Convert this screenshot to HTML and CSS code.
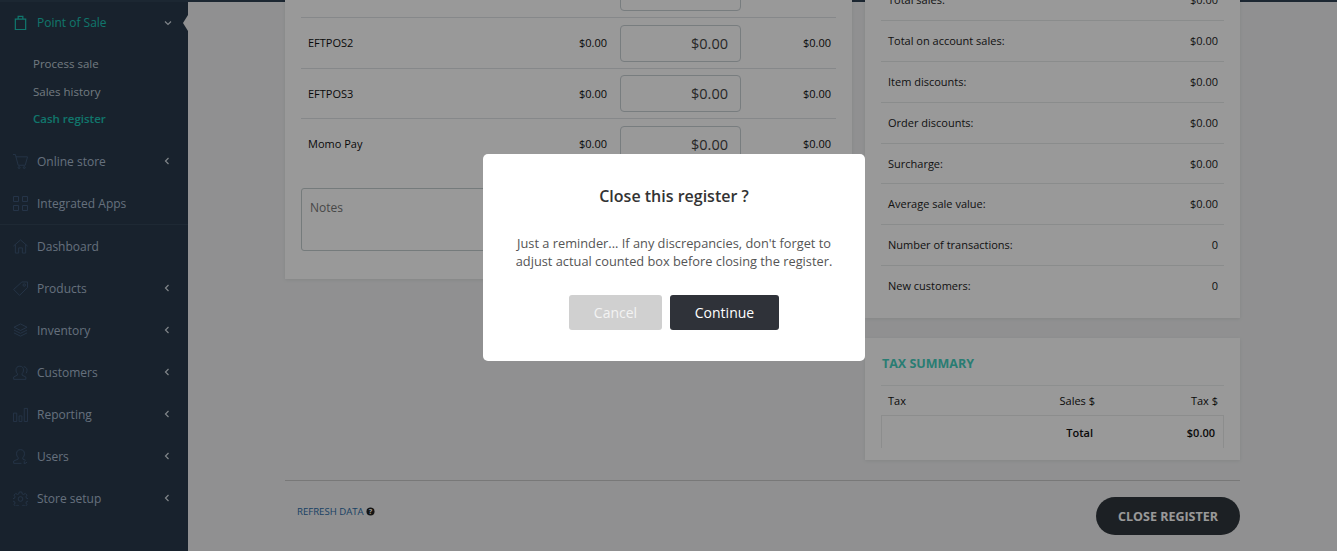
FILE: index.html
```html
<!DOCTYPE html>
<html lang="en">
<head>
<meta charset="utf-8">
<title>Cash register</title>
<link rel="stylesheet" href="styles.css">
</head>
<body>
<div class="topbar"></div>
<div class="app">
  <nav class="sidebar">
    <div class="nav-item active">
      <svg class="nav-icon" viewBox="0 0 16 16"><path d="M2.500 4.500h11v11h-11zM5.500 4.500V1.500h5v3"/></svg>
      <span class="nav-label">Point of Sale</span>
      <svg class="chev" viewBox="0 0 8 8"><path d="M1 2.500L4 5.500L7 2.500"/></svg>
    </div>
    <div class="sub">
      <div class="sub-item">Process sale</div>
      <div class="sub-item">Sales history</div>
      <div class="sub-item current">Cash register</div>
    </div>
    <div class="nav-item">
      <svg class="nav-icon" viewBox="0 0 16 16"><path d="M0 0.500h2.500l3 11.500h7.500l2.500-9h-12.500"/><circle cx="6.500" cy="14.500" r="1"/><circle cx="12" cy="14.500" r="1"/></svg>
      <span class="nav-label">Online store</span>
      <svg class="chev" viewBox="0 0 8 8"><path d="M5.500 1L2.500 4L5.500 7"/></svg>
    </div>
    <div class="nav-item divided">
      <svg class="nav-icon" viewBox="0 0 15 15"><path d="M0.500 0.500h5v5h-5zM9.500 0.500h5v5h-5zM0.500 9.500h5v5h-5zM9.500 9.500h5v5h-5z"/></svg>
      <span class="nav-label">Integrated Apps</span>
    </div>
    <div class="nav-item">
      <svg class="nav-icon" viewBox="0 0 16 16"><path d="M0.500 7.500L8 1l7.500 6.500M2.500 6v9h3.500v-5.500h4V15h3.500V6"/></svg>
      <span class="nav-label">Dashboard</span>
    </div>
    <div class="nav-item">
      <svg class="nav-icon" viewBox="0 0 16 16"><path d="M0.700 9L9.500 1h6v6L7 15.300z"/><circle cx="12" cy="4.300" r="1.300"/></svg>
      <span class="nav-label">Products</span>
      <svg class="chev" viewBox="0 0 8 8"><path d="M5.500 1L2.500 4L5.500 7"/></svg>
    </div>
    <div class="nav-item">
      <svg class="nav-icon" viewBox="0 0 16 16"><path d="M8 1l7 3.500l-7 3.500l-7-3.500zM1 7.500l7 3.500l7-3.500M1 10.500l7 3.500l7-3.500"/></svg>
      <span class="nav-label">Inventory</span>
      <svg class="chev" viewBox="0 0 8 8"><path d="M5.500 1L2.500 4L5.500 7"/></svg>
    </div>
    <div class="nav-item">
      <svg class="nav-icon" viewBox="0 0 16 16"><path d="M0.700 15.300v-2.500l4-2v-1.500c-1-1-1.500-2.200-1.500-4c0-2.500 1.500-4 4-4s4 1.500 4 4c0 1.800-.5 3-1.500 4v1.500l4 2v2.500zM11.500 1.800c2 .3 3.500 1.500 3.500 3.700c0 1.500-.5 2.500-1 3.300"/></svg>
      <span class="nav-label">Customers</span>
      <svg class="chev" viewBox="0 0 8 8"><path d="M5.500 1L2.500 4L5.500 7"/></svg>
    </div>
    <div class="nav-item">
      <svg class="nav-icon" viewBox="0 0 16 16"><path d="M0.500 6.500h3.500v9h-3.500zM6.500 9.500h3v6h-3zM12 1.500h3.500v14h-3.500z"/></svg>
      <span class="nav-label">Reporting</span>
      <svg class="chev" viewBox="0 0 8 8"><path d="M5.500 1L2.500 4L5.500 7"/></svg>
    </div>
    <div class="nav-item">
      <svg class="nav-icon" viewBox="0 0 16 16"><path d="M0.700 15.300v-2.500l4.800-2v-1.500c-1-1-1.700-2.500-1.700-4.300c0-2.800 1.600-4.300 4.200-4.300s4.200 1.500 4.200 4.300c0 1.800-.7 3.300-1.700 4.300v1.500l3 1.300M9 15.300H0.700M12 13v3l3-2"/></svg>
      <span class="nav-label">Users</span>
      <svg class="chev" viewBox="0 0 8 8"><path d="M5.500 1L2.500 4L5.500 7"/></svg>
    </div>
    <div class="nav-item">
      <svg class="nav-icon" viewBox="0 0 16 16"><path d="M6.700 1h2.600l.4 2l1.600.7l1.800-1.100l1.800 1.800l-1.100 1.800l.7 1.600l2 .4v2.600l-2 .4l-.7 1.600l1.100 1.800l-1.800 1.800l-1.800-1.100l-1.600.7l-.4 1.500h-2.600l-.4-1.500l-1.600-.7l-1.800 1.100l-1.800-1.800l1.100-1.800l-.7-1.600l-2-.4v-2.600l2-.4l.7-1.600l-1.100-1.800l1.800-1.800l1.800 1.100l1.600-.7z"/><circle cx="8" cy="8.500" r="2.500"/></svg>
      <span class="nav-label">Store setup</span>
      <svg class="chev" viewBox="0 0 8 8"><path d="M5.500 1L2.500 4L5.500 7"/></svg>
    </div>
    <span class="notch"></span>
  </nav>

  <main class="main">
    <div class="columns">
      <section class="panel payments">
        <div class="pay-row">
          <span class="pay-name"></span><span class="pay-amt"></span>
          <span class="pay-input">$0.00</span><span class="pay-amt">$0.00</span>
        </div>
        <div class="pay-row">
          <span class="pay-name">EFTPOS2</span><span class="pay-amt">$0.00</span>
          <span class="pay-input">$0.00</span><span class="pay-amt">$0.00</span>
        </div>
        <div class="pay-row short">
          <span class="pay-name">EFTPOS3</span><span class="pay-amt">$0.00</span>
          <span class="pay-input">$0.00</span><span class="pay-amt">$0.00</span>
        </div>
        <div class="pay-row last">
          <span class="pay-name">Momo Pay</span><span class="pay-amt">$0.00</span>
          <span class="pay-input">$0.00</span><span class="pay-amt">$0.00</span>
        </div>
        <div class="notes">Notes</div>
      </section>

      <div class="right-col">
        <section class="panel summary">
          <div class="sum-row"><span>Total sales:</span><span>$0.00</span></div>
          <div class="sum-row"><span>Total on account sales:</span><span>$0.00</span></div>
          <div class="sum-row"><span>Item discounts:</span><span>$0.00</span></div>
          <div class="sum-row"><span>Order discounts:</span><span>$0.00</span></div>
          <div class="sum-row short"><span>Surcharge:</span><span>$0.00</span></div>
          <div class="sum-row"><span>Average sale value:</span><span>$0.00</span></div>
          <div class="sum-row"><span>Number of transactions:</span><span>0</span></div>
          <div class="sum-row last"><span>New customers:</span><span>0</span></div>
        </section>
        <section class="panel tax">
          <h2 class="tax-title">TAX SUMMARY</h2>
          <div class="tax-head"><span class="c1">Tax</span><span class="c2">Sales $</span><span class="c3 wide">Tax $</span></div>
          <div class="tax-body"><span class="c1"></span><span class="c2">Total</span><span class="c3">$0.00</span></div>
        </section>
      </div>
    </div>

    <footer class="footer">
      <span class="refresh">REFRESH DATA
        <svg class="help" viewBox="0 0 10 10"><circle cx="5" cy="5" r="4.500"/><text x="5" y="7.600" class="help-q">?</text></svg>
      </span>
      <span class="close-btn">CLOSE REGISTER</span>
    </footer>
  </main>
</div>

<div class="overlay">
  <div class="modal">
    <h1 class="modal-title">Close this register ?</h1>
    <p class="modal-text">Just a reminder... If any discrepancies, don't forget to<br>adjust actual counted box before closing the register.</p>
    <div class="modal-actions">
      <span class="btn cancel">Cancel</span>
      <span class="btn continue">Continue</span>
    </div>
  </div>
</div>
</body>
</html>
```
FILE: styles.css
```css
* { box-sizing: border-box; }
html, body { margin: 0; height: 100%; overflow: hidden; }
body { font-family: "Open Sans", sans-serif; font-size: 11px; color: #111; background: #f0f1f2; }

.topbar { height: 2px; background: #2f4154; }
.app { display: flex; height: 549px; }

.sidebar { position: relative; width: 188px; flex: none; background: #283a4b; color: #aabbd0; }
.nav-item { display: flex; align-items: center; height: 42px; padding: 0 17px 0 13px; font-size: 12px; }
.nav-item.active { height: 41px; padding-right: 16px; color: #1cc4b5; }
.nav-item.divided { height: 43px; border-bottom: 1px solid #334557; }
.nav-icon { width: 15px; height: 15px; flex: none; margin-right: 9px; fill: none; stroke: #3f5778; stroke-width: 1; }
.active .nav-icon { stroke: #1cc4b5; stroke-width: 1.3; }
.nav-label { flex: 1; }
.chev { width: 8px; height: 8px; fill: none; stroke: #d5dce4; stroke-width: 1.2; }
.sub { padding: 7px 0 7.500px 33px; font-size: 11.500px; color: #bfcad6; }
.sub-item { height: 27.500px; line-height: 27.500px; }
.sub-item.current { color: #1cc4b5; font-weight: 600; }
.notch { position: absolute; right: 0; top: 13px; width: 5px; height: 16px; background: #f0f1f2; clip-path: polygon(0 50%, 100% 0, 100% 100%); }

.main { flex: 1; min-width: 0; padding: 0 97px; }
.columns { display: flex; gap: 13px; align-items: flex-start; margin-top: -42px; }
.panel { background: #fff; box-shadow: 0 1px 4px rgba(0, 0, 0, .08); }

.payments { width: 567px; padding: 7px 16px 28px; }
.pay-row { display: flex; align-items: center; height: 51px; border-bottom: 1px solid #dfe3e6; padding: 0 5px 0 7px; }
.pay-row.short { height: 50px; }
.pay-row.last { border-bottom: 0; }
.pay-name { flex: 1; margin-bottom: 2px; }
.pay-amt { width: 60px; margin-bottom: 2px; text-align: right; }
.short .pay-name, .short .pay-amt { margin-bottom: 0; }
.pay-input { width: 121px; height: 37px; margin-left: 13px; border: 1px solid #c8d0d4; border-radius: 4px; font-size: 14.500px; line-height: 35px; text-align: right; padding-right: 12px; color: #444; }
.pay-input + .pay-amt { width: 90px; }
.notes { height: 63px; margin-top: 18px; padding: 10px 8px; border: 1px solid #c3cdcf; border-radius: 3px; font-size: 12px; color: #777; }

.right-col { width: 375px; }
.summary { padding: 20px 16px 11px; }
.sum-row { display: flex; justify-content: space-between; align-items: center; height: 41px; padding: 0 6px 2px 7px; border-bottom: 1px solid #e7e9ea; color: #222; }
.sum-row.short { height: 40px; padding-bottom: 0; }
.sum-row.last { border-bottom: 0; }

.tax { margin-top: 20px; height: 122px; padding: 17px 16px 0; }
.tax-title { margin: 0; height: 31px; padding-left: 1px; font-size: 12.500px; font-weight: 700; color: #45d0c0; border-bottom: 1px solid #eceeef; line-height: 18px; }
.tax-head, .tax-body { display: flex; align-items: center; color: #111; }
.tax-head { height: 29px; padding: 0 6px 0 7px; font-weight: 500; }
.tax-body { height: 33px; padding: 0 8px 0 7px; border: 1px solid #e9ebec; border-bottom: 0; font-weight: 600; }
.c1 { width: 120px; }
.c2 { flex: 1; text-align: right; }
.c3 { width: 122px; text-align: right; }
.c3.wide { width: 123px; }

.footer { display: flex; justify-content: space-between; align-items: center; margin-top: 20px; border-top: 1px solid #c8c8c8; padding: 16px 0 0; }
.refresh { display: flex; align-items: center; gap: 2px; margin: 0 0 9px 12px; font-size: 9.600px; color: #2d6da8; }
.help { width: 9px; height: 9px; fill: #222; }
.help-q { font-size: 8px; font-weight: 700; fill: #fff; text-anchor: middle; }
.close-btn { display: flex; align-items: center; justify-content: center; width: 144px; height: 38px; border-radius: 19px; background: #30363c; color: #fff; font-size: 12.500px; font-weight: 700; }

.overlay { position: fixed; inset: 0; background: rgba(0, 0, 0, .4); padding: 154px 0 0 483px; }
.modal { width: 382px; height: 207px; padding-top: 31px; background: #fff; border-radius: 5px; text-align: center; }
.modal-title { margin: 0; font-size: 16px; line-height: 22px; font-weight: 600; color: #333; }
.modal-text { margin: 27px 0 0; font-size: 12.800px; line-height: 18px; color: #555; }
.modal-actions { display: flex; gap: 8px; margin: 25px 0 0 86px; }
.btn { display: flex; align-items: center; justify-content: center; height: 35px; border-radius: 3px; font-size: 14px; font-weight: 500; }
.cancel { width: 93px; background: #d0d0d0; color: #f3f3f3; }
.continue { width: 109px; background: #2f3239; color: #fff; }
```
